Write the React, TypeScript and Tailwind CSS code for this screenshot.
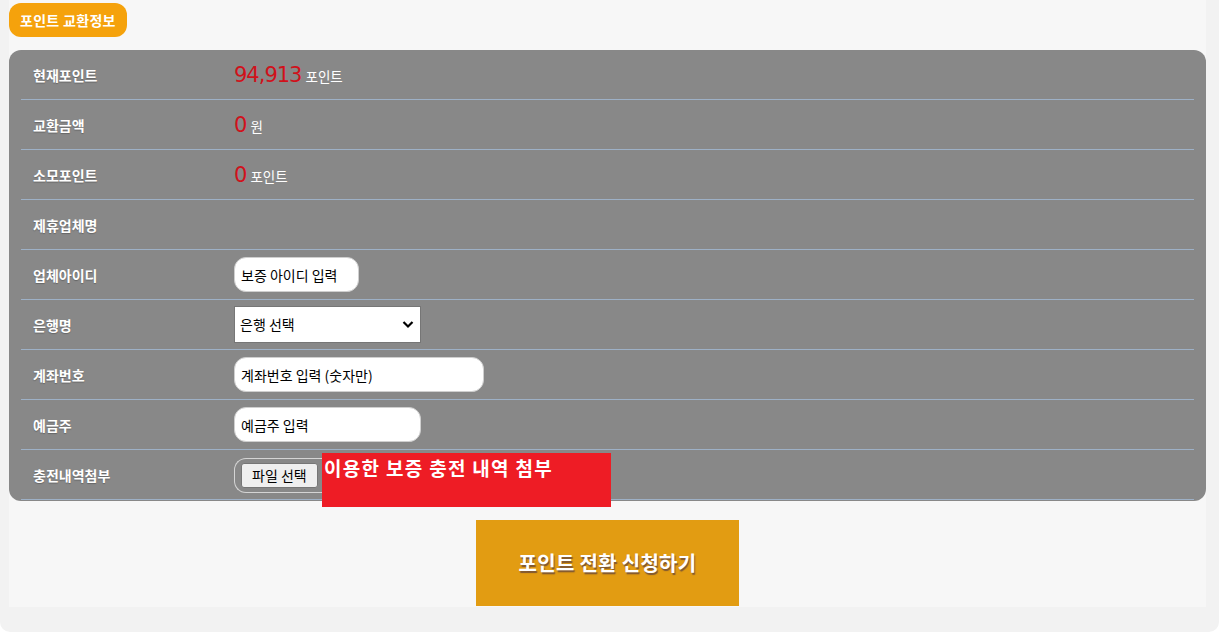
const font = { fontFamily: '"Noto Sans CJK KR", "Noto Sans", sans-serif' };

function Row({ label, children }: { label: string; children?: React.ReactNode }) {
  return (
    <div className="flex items-center h-[50px] border-b border-[#9db0c6]">
      <div className="w-[213px] pl-3 text-[14px] font-bold text-white [text-shadow:0_1px_1px_rgba(0,0,0,0.25)] leading-none">
        {label}
      </div>
      <div className="flex-1 flex items-center h-full">{children}</div>
    </div>
  );
}

function Amount({ value, unit }: { value: string; unit: string }) {
  return (
    <div className="flex items-baseline gap-[4px] mt-[1px]">
      <span className="text-[21px] text-[#d0111b] leading-none" style={{ fontFamily: '"DejaVu Sans", sans-serif', letterSpacing: "-1px" }}>
        {value}
      </span>
      <span className="text-[13.5px] text-white leading-none">{unit}</span>
    </div>
  );
}

export default function App() {
  return (
    <div className="bg-white w-[1220px] h-[639px]" style={font}>
      <div className="bg-[#f2f2f2] w-[1219px] h-[632px] rounded-b-[10px]">
        <div className="ml-[9px] w-[1197px] h-[607px] bg-[#f7f7f7] pt-[3px]">
          <div className="inline-flex items-center h-[34px] px-[11px] rounded-[12px] bg-[#f5a20c] text-white text-[14px] font-bold tracking-[0.3px]">
            포인트 교환정보
          </div>
          <div className="mt-[13px] bg-[#888888] rounded-[12px] px-3 h-[451px]">
            <Row label="현재포인트">
              <Amount value="94,913" unit="포인트" />
            </Row>
            <Row label="교환금액">
              <Amount value="0" unit="원" />
            </Row>
            <Row label="소모포인트">
              <Amount value="0" unit="포인트" />
            </Row>
            <Row label="제휴업체명" />
            <Row label="업체아이디">
              <input
                className="w-[125px] h-[35px] rounded-[12px] bg-white border border-[#cfcfcf] px-[6px] text-[14px] text-black placeholder:text-black outline-none"
                placeholder="보증 아이디 입력"
              />
            </Row>
            <Row label="은행명">
              <div className="relative w-[187px] h-[37px] bg-white border border-[#767676] flex items-center pl-[5px] text-[14px] text-black">
                은행 선택
                <svg className="absolute right-[6px] top-[13px]" width="12" height="9" viewBox="0 0 12 9">
                  <path d="M1.5 2 L6 6.5 L10.5 2" stroke="#000" strokeWidth="2.2" fill="none" />
                </svg>
              </div>
            </Row>
            <Row label="계좌번호">
              <input
                className="w-[250px] h-[35px] rounded-[12px] bg-white border border-[#cfcfcf] px-[6px] text-[14px] text-black placeholder:text-black outline-none"
                placeholder="계좌번호 입력 (숫자만)"
              />
            </Row>
            <Row label="예금주">
              <input
                className="w-[187px] h-[35px] rounded-[12px] bg-white border border-[#cfcfcf] px-[6px] text-[14px] text-black placeholder:text-black outline-none"
                placeholder="예금주 입력"
              />
            </Row>
            <div className="flex h-[50px] border-b border-[#9db0c6]">
              <div className="w-[213px] pl-3 text-[14px] font-bold text-white [text-shadow:0_1px_1px_rgba(0,0,0,0.25)] leading-none self-center">
                충전내역첨부
              </div>
              <div className="flex items-start">
                <div className="mt-[8px] w-[120px] h-[35px] rounded-l-[12px] border border-r-0 border-[#d4d4d4] flex items-center pl-[6px]">
                  <div className="h-[25px] px-[10px] bg-[#efefef] border border-[#767676] rounded-[3px] text-[14px] text-black flex items-center">
                    파일 선택
                  </div>
                </div>
                <div className="relative z-10 mt-[3px] -ml-[32px] w-[289px] h-[54px] bg-[#ee1c25] text-white text-[19px] font-bold tracking-[1.3px] pl-[2px] pt-[3px] leading-[24px]">
                  이용한 보증 충전 내역 첨부
                </div>
              </div>
            </div>
          </div>
          <div className="flex justify-center mt-[19px]">
            <button className="w-[263px] h-[86px] bg-[#e29c12] text-white text-[20px] font-bold tracking-[0.3px] [text-shadow:1px_2px_1px_rgba(60,40,70,0.6)]">
              포인트 전환 신청하기
            </button>
          </div>
        </div>
      </div>
    </div>
  );
}
